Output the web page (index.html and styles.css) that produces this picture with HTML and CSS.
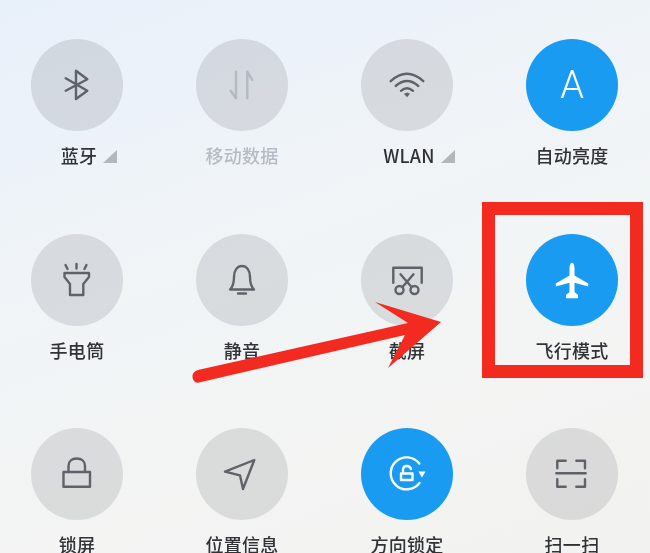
FILE: index.html
```html
<!DOCTYPE html>
<html lang="zh-CN">
<head>
    <meta charset="UTF-8">
    <meta name="viewport" content="width=device-width, initial-scale=1.0">
    <title>控制中心</title>
    <link rel="stylesheet" href="styles.css">
</head>
<body>

    <div class="grid">
        <div class="tile">
            <div class="circle">
                <svg class="icon" viewBox="0 0 92 92"><path d="M34.7 39.3 56.3 51.7 45 60V31.7L56.3 40.3 34.7 51.7"/></svg>
            </div>
            <div class="label label-more"><span>蓝牙</span></div>
        </div>
        <div class="tile">
            <div class="circle">
                <svg class="icon icon-off" viewBox="0 0 92 92"><path d="M40 32.7V59.3L34.7 51.7M51.3 59.3V32.7L56.3 41"/></svg>
            </div>
            <div class="label label-off">移动数据</div>
        </div>
        <div class="tile">
            <div class="circle">
                <svg class="icon" viewBox="0 0 92 92">
                    <path d="M29.7 42.2Q46 27.5 62.3 42.2M34.7 47Q46 37 57.3 47M40 51.8Q46 46.5 52 51.8"/>
                    <path class="solid" d="M43 54.8 46 53.5 49 54.8 46 58.2Z"/>
                </svg>
            </div>
            <div class="label label-more"><span>WLAN</span></div>
        </div>
        <div class="tile">
            <div class="circle circle-on"><span class="letter">A</span></div>
            <div class="label">自动亮度</div>
        </div>

        <div class="tile">
            <div class="circle">
                <svg class="icon" viewBox="0 0 92 92"><path d="M33.5 39H58V43L52.3 50V61H39V50L33.5 43ZM34.5 31 36.5 35M45.5 30V34.5M55.5 31 53.5 35"/></svg>
            </div>
            <div class="label">手电筒</div>
        </div>
        <div class="tile">
            <div class="circle">
                <svg class="icon" viewBox="0 0 92 92"><path d="M34 55.5H58C54.500 52 54 48 54 43 54 36 50.500 32 46 32S38 36 38 43C38 48 37.500 52 34 55.500ZM42 59.500H50"/></svg>
            </div>
            <div class="label">静音</div>
        </div>
        <div class="tile">
            <div class="circle">
                <svg class="icon" viewBox="0 0 92 92">
                    <path d="M32.300 48.700V33.700H60.700V48.700M39.500 40.300 50.500 53M52.500 40.300 41.500 53"/>
                    <circle cx="38.500" cy="56" r="4"/>
                    <circle cx="53.500" cy="56" r="4"/>
                </svg>
            </div>
            <div class="label">截屏</div>
        </div>
        <div class="tile">
            <div class="circle circle-on">
                <svg class="icon icon-on" viewBox="0 0 92 92"><path class="solid" d="M46 28.700C44.200 28.700 43.500 32 43.500 34V41.500L29.800 49.500V52.500L43.500 48.700V58L40 61V64.300H52V61L48.500 58V48.700L62.200 52.500V49.500L48.500 41.500V34C48.500 32 47.800 28.700 46 28.700Z"/></svg>
            </div>
            <div class="label">飞行模式</div>
        </div>

        <div class="tile">
            <div class="circle">
                <svg class="icon" viewBox="0 0 92 92"><path d="M32.500 44H59V58.700H32.500ZM37.500 44V38C37.500 33 41 30.500 45.700 30.500S54 33 54 38V44"/></svg>
            </div>
            <div class="label">锁屏</div>
        </div>
        <div class="tile">
            <div class="circle">
                <svg class="icon" viewBox="0 0 92 92"><path d="M58.300 32 29 43.700 44 47.300 47 61Z"/></svg>
            </div>
            <div class="label">位置信息</div>
        </div>
        <div class="tile">
            <div class="circle circle-on">
                <svg class="icon icon-on" viewBox="0 0 92 92">
                    <path d="M58.300 35.500A16 16 0 1 0 58.500 55M40 45.500H51.500V52H40ZM42 45.500V42C42 39.500 43.500 38 46 38S49.500 39.500 50 41"/>
                    <path class="solid" d="M57.500 43.500H64.500L61 49.500Z"/>
                </svg>
            </div>
            <div class="label">方向锁定</div>
        </div>
        <div class="tile">
            <div class="circle">
                <svg class="icon" viewBox="0 0 92 92"><path d="M31.300 40.300V32.700H39.700M50.300 32.700H59V40.300M31.300 51.300V58.700H39.700M50.300 58.700H59V51.300M30.300 45.300H59.700"/></svg>
            </div>
            <div class="label">扫一扫</div>
        </div>
    </div>

    <div class="highlight"></div>

    <svg class="arrow" viewBox="0 0 650 553">
        <path d="M200 369.500 408 323 375 302 441 322 388 368 405 335 199 382.500C195 383.500 192.500 380 192.500 376.500 192.500 373 195 370.500 200 369.500Z"/>
    </svg>

</body>
</html>
```

FILE: styles.css
```css
html, body {
    height: 100%;
}

body {
    margin: 0;
    position: relative;
    overflow: hidden;
    font-family: "Noto Sans CJK SC", "Liberation Sans", sans-serif;
    background: linear-gradient(160deg, #e8f0fa 0%, #f0f4f8 38%, #f3f4f3 70%, #f2f2f0 100%);
}

.grid {
    display: grid;
    grid-template-columns: repeat(4, 92px);
    column-gap: 73px;
    row-gap: 66.5px;
    padding: 39px 0 0 31px;
    filter: blur(0.4px);
}

.tile {
    display: flex;
    flex-direction: column;
    align-items: center;
}

.circle {
    width: 92px;
    height: 92px;
    border-radius: 50%;
    background-color: rgba(40, 40, 50, 0.12);
    display: flex;
    align-items: center;
    justify-content: center;
}

.circle-on {
    background-color: #1a9bf2;
}

.icon {
    width: 92px;
    height: 92px;
    fill: none;
    stroke: #5f6369;
    stroke-width: 2.4;
    stroke-linecap: round;
    stroke-linejoin: round;
}

.icon .solid {
    fill: #5f6369;
    stroke: none;
}

.icon-off {
    stroke: #b4b9c0;
}

.icon-on {
    stroke: #fff;
}

.icon-on .solid {
    fill: #fff;
}

.letter {
    color: #fff;
    font-family: Roboto, sans-serif;
    font-weight: 300;
    font-size: 38px;
    line-height: 1;
}

.label {
    margin-top: 12px;
    height: 24px;
    line-height: 24px;
    font-size: 18px;
    font-weight: 500;
    letter-spacing: 0.3px;
    color: #303236;
    white-space: nowrap;
}

.label-off {
    color: #b6bbc3;
}

.label-more {
    position: relative;
    margin-left: 4px;
}

.label-more::after {
    content: "";
    position: absolute;
    left: 100%;
    bottom: 4px;
    margin-left: 6px;
    border-style: solid;
    border-width: 0 0 13px 14px;
    border-color: transparent transparent #b3b6bb transparent;
}

.highlight {
    position: absolute;
    left: 482px;
    top: 202px;
    width: 161px;
    height: 176px;
    box-sizing: border-box;
    border: 13px solid #f32a20;
}

.arrow {
    position: absolute;
    left: 0;
    top: 0;
    width: 650px;
    height: 553px;
    fill: #f32a20;
}
```
